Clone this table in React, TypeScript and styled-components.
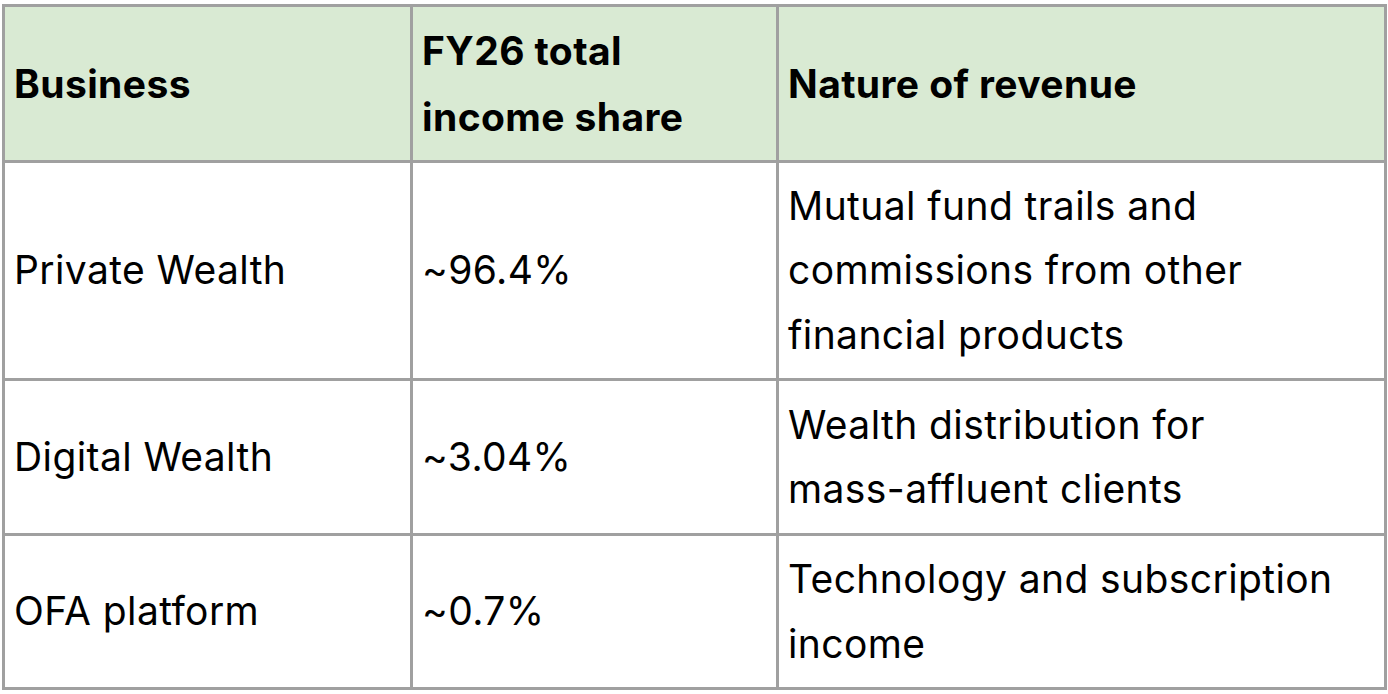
import styled, { createGlobalStyle } from 'styled-components'

const GlobalStyle = createGlobalStyle`
    html, body {
        margin: 0;
        padding: 0;
        background: #ffffff;
    }
    body {
        padding: 4px 4px 0 2px;
        font-family: Inter, "Liberation Sans", sans-serif;
        color: #000000;
    }
`

const Table = styled.table`
    width: 1382px;
    border-collapse: collapse;
    table-layout: fixed;
    font-size: 39px;
    letter-spacing: 0.4px;
`

const BodyRow = styled.tr<{ rowHeight: number }>`
    height: ${({ rowHeight }) => rowHeight}px;
`

const HeadCell = styled.th`
    background-color: #d9ead3;
    border: 3.5px solid #a0a0a0;
    padding: 10px 8px 10px 9px;
    line-height: 66px;
    font-weight: 700;
    text-align: left;
    vertical-align: middle;
`

const Cell = styled.td`
    border: 3.5px solid #a0a0a0;
    padding: 8px 8px 8px 9px;
    line-height: 64.5px;
    font-weight: 400;
    vertical-align: middle;
`

interface Row {
    business: string;
    share: string;
    nature: string[];
    height: number;
}

const rows: Row[] = [
    { business: 'Private Wealth', share: '~96.4%', nature: ['Mutual fund trails and', 'commissions from other', 'financial products'], height: 218 },
    { business: 'Digital Wealth', share: '~3.04%', nature: ['Wealth distribution for', 'mass-affluent clients'], height: 155 },
    { business: 'OFA platform', share: '~0.7%', nature: ['Technology and subscription', 'income'], height: 154 },
]

export default function App() {
    return (
        <>
            <GlobalStyle />
            <Table>
                <colgroup>
                    <col style={{ width: 408 }} />
                    <col style={{ width: 366 }} />
                    <col style={{ width: 608 }} />
                </colgroup>
                <thead>
                    <BodyRow rowHeight={156}>
                        <HeadCell>Business</HeadCell>
                        <HeadCell>FY26 total<br />income share</HeadCell>
                        <HeadCell>Nature of revenue</HeadCell>
                    </BodyRow>
                </thead>
                <tbody>
                    {rows.map((row) => (
                        <BodyRow key={row.business} rowHeight={row.height}>
                            <Cell>{row.business}</Cell>
                            <Cell>{row.share}</Cell>
                            <Cell>
                                {row.nature.map((line, index) => (
                                    <span key={`${row.business}_${index}`}>
                                        {index > 0 && <br />}
                                        {line}
                                    </span>
                                ))}
                            </Cell>
                        </BodyRow>
                    ))}
                </tbody>
            </Table>
        </>
    )
}
